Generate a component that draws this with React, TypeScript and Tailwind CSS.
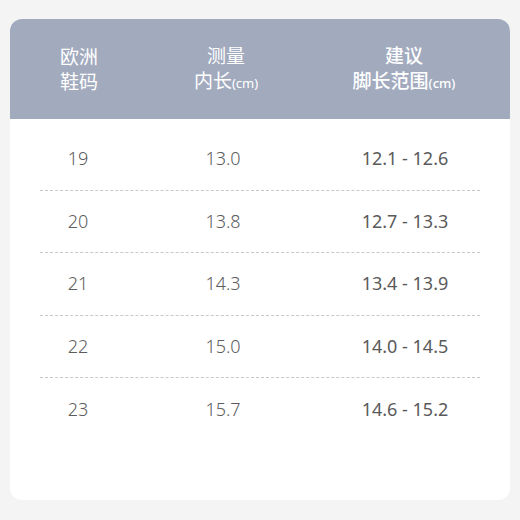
const ROWS = [
  ['19', '13.0', '12.1 - 12.6'],
  ['20', '13.8', '12.7 - 13.3'],
  ['21', '14.3', '13.4 - 13.9'],
  ['22', '15.0', '14.0 - 14.5'],
  ['23', '15.7', '14.6 - 15.2'],
];

export default function App() {
  return (
    <div
      className="w-[520px] h-[520px] bg-[#f4f4f4] px-[10px] pt-[19px]"
      style={{ fontFamily: '"Noto Sans", "Noto Sans CJK SC", sans-serif' }}
    >
      <div className="bg-white rounded-[12px] overflow-hidden h-[481px]">
        <div className="bg-[#a2aabe] h-[100px] grid grid-cols-[138px_156px_206px] items-center text-white text-[19px] leading-[25px] pt-[2px]">
          <div className="flex flex-col items-center">
            <span>欧洲</span>
            <span>鞋码</span>
          </div>
          <div className="flex flex-col items-center">
            <span>测量</span>
            <span>
              内长<span className="text-[13px]">(cm)</span>
            </span>
          </div>
          <div className="flex flex-col items-center pr-[6px] font-medium">
            <span>建议</span>
            <span>
              脚长范围<span className="text-[13px]">(cm)</span>
            </span>
          </div>
        </div>
        <div className="mx-[30px] pt-[9px]">
          {ROWS.map((r, i) => (
            <div
              key={r[0]}
              className={
                'grid grid-cols-[76px_214px_150px] items-center h-[62.6px] text-[18px] text-[#5c5c5c] font-light' +
                (i < ROWS.length - 1 ? ' border-b border-dashed border-[#c8c8c8]' : '')
              }
            >
              <span className="text-center">{r[0]}</span>
              <span className="text-center">{r[1]}</span>
              <span className="text-center text-[#5a5a5a] font-normal">{r[2]}</span>
            </div>
          ))}
        </div>
      </div>
    </div>
  );
}
